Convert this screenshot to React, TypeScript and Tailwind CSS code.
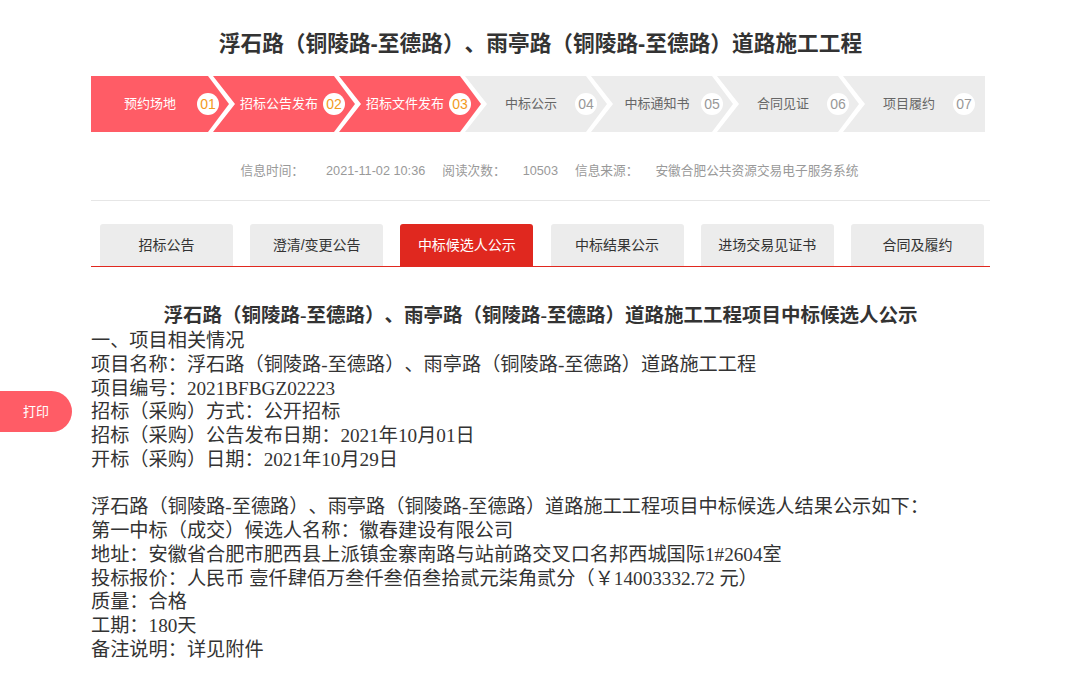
const steps = [
  { name: "预约场地", no: "01", done: true },
  { name: "招标公告发布", no: "02", done: true },
  { name: "招标文件发布", no: "03", done: true },
  { name: "中标公示", no: "04", done: false },
  { name: "中标通知书", no: "05", done: false },
  { name: "合同见证", no: "06", done: false },
  { name: "项目履约", no: "07", done: false },
];

const tabs = ["招标公告", "澄清/变更公告", "中标候选人公示", "中标结果公示", "进场交易见证书", "合同及履约"];

const lines = [
  "一、项目相关情况",
  "项目名称：浮石路（铜陵路-至德路）、雨亭路（铜陵路-至德路）道路施工工程",
  "项目编号：2021BFBGZ02223",
  "招标（采购）方式：公开招标",
  "招标（采购）公告发布日期：2021年10月01日",
  "开标（采购）日期：2021年10月29日",
  "",
  "浮石路（铜陵路-至德路）、雨亭路（铜陵路-至德路）道路施工工程项目中标候选人结果公示如下：",
  "第一中标（成交）候选人名称：徽春建设有限公司",
  "地址：安徽省合肥市肥西县上派镇金寨南路与站前路交叉口名邦西城国际1#2604室",
  "投标报价：人民币 壹仟肆佰万叁仟叁佰叁拾贰元柒角贰分（￥14003332.72 元）",
  "质量：合格",
  "工期：180天",
  "备注说明：详见附件",
];

function StepItem({ step, index }: { step: (typeof steps)[number]; index: number }) {
  const first = index === 0;
  const last = index === steps.length - 1;
  // chevron shape: notch on the left, tip on the right
  const shape = first
    ? "[clip-path:polygon(0_0,calc(100%-21px)_0,100%_50%,calc(100%-21px)_100%,0_100%)]"
    : last
      ? "[clip-path:polygon(0_0,100%_0,100%_100%,0_100%,22px_50%)]"
      : "[clip-path:polygon(0_0,calc(100%-21px)_0,100%_50%,calc(100%-21px)_100%,0_100%,22px_50%)]";

  return (
    <div
      className={`flex h-[56px] shrink-0 items-center pr-[10px] ${shape} ${
        first ? "w-[138px] pl-[12px]" : "-ml-[16px] w-[142px] pl-[22px]"
      } ${step.done ? "bg-[#ff5c66] text-white" : "bg-[#ececec] text-[#666]"}`}
    >
      <span className="flex-1 text-center text-[13px]">{step.name}</span>
      <span
        className={`flex h-[22px] w-[22px] items-center justify-center rounded-full bg-white text-[14px] ${
          step.done ? "text-[#f39a1e]" : "text-[#999]"
        }`}
      >
        {step.no}
      </span>
    </div>
  );
}

export default function App() {
  return (
    <div className="relative min-h-[675px] bg-white pt-[29px] font-['Liberation_Sans','Noto_Sans_CJK_SC',sans-serif] [text-spacing-trim:space-all]">
      {/* 打印按钮 */}
      <div className="fixed left-0 top-[391px] flex h-[41px] w-[72px] items-center justify-center rounded-r-full bg-[#ff5c66] text-[13px] text-white">
        打印
      </div>

      <div className="ml-[91px] w-[899px]">
        <h1 className="text-center text-[21.7px] font-bold leading-[30px] text-[#333]">
          浮石路（铜陵路-至德路）、雨亭路（铜陵路-至德路）道路施工工程
        </h1>

        {/* 流程步骤 */}
        <div className="mt-[17px] flex">
          {steps.map((s, i) => (
            <StepItem key={s.no} step={s} index={i} />
          ))}
        </div>

        {/* 信息栏 */}
        <div className="mt-[30px] flex h-[20px] items-center justify-center gap-[17px] pl-[18px] text-[12.7px] text-[#999]">
          <span>信息时间：</span>
          <span className="ml-[5px]">2021-11-02 10:36</span>
          <span>阅读次数：</span>
          <span>10503</span>
          <span>信息来源：</span>
          <span>安徽合肥公共资源交易电子服务系统</span>
        </div>
        <div className="mt-[18px] h-px bg-[#e6e6e6]" />

        {/* 标签页 */}
        <div className="mt-[23px] flex justify-between border-b border-[#e0281f] pl-[9px] pr-[6px]">
          {tabs.map((t) => {
            const active = t === "中标候选人公示";
            return (
              <div
                key={t}
                className={`flex h-[42px] w-[133px] items-center justify-center rounded-t-[3px] text-[14px] ${
                  active ? "bg-[#e0281f] text-white" : "bg-[#ececec] text-[#333]"
                }`}
              >
                {t}
              </div>
            );
          })}
        </div>

        {/* 正文 */}
        <div className="mt-[37px] font-['Liberation_Serif','Noto_Sans_CJK_SC',serif] text-[#333]">
          <h2 className="text-center text-[19.5px] font-bold leading-[24px]">
            浮石路（铜陵路-至德路）、雨亭路（铜陵路-至德路）道路施工工程项目中标候选人公示
          </h2>
          <div className="mt-px text-[19.2px] leading-[23.75px]">
            {lines.map((l, i) => (
              <p key={i} className="h-[23.75px] whitespace-nowrap">
                {l}
              </p>
            ))}
          </div>
        </div>
      </div>
    </div>
  );
}
